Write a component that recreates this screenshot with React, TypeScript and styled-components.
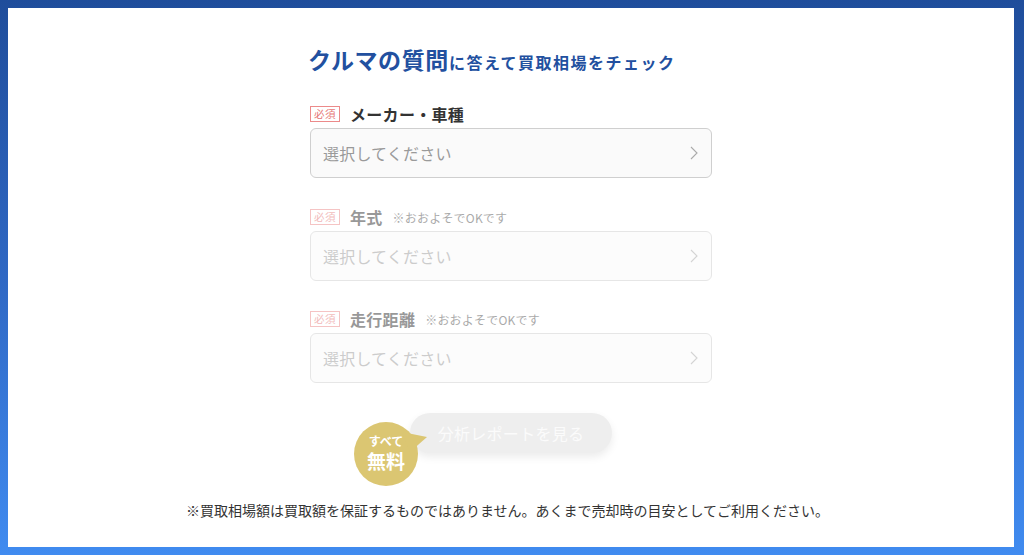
import React from "react";
import styled, { createGlobalStyle } from "styled-components";

const Global = createGlobalStyle`
  html, body { margin: 0; padding: 0; }
  body {
    font-family: "Noto Sans CJK JP", "Noto Sans", sans-serif;
    width: 1024px;
    height: 555px;
    overflow: hidden;
  }
`;

const Frame = styled.div`
  box-sizing: border-box;
  width: 1024px;
  height: 555px;
  padding: 8px 10px 8px 8px;
  background: linear-gradient(180deg, #1f4d9b 0%, #2f68c4 50%, #408bf0 100%);
`;

const Card = styled.main`
  box-sizing: border-box;
  height: 100%;
  background: #fff;
  display: flex;
  flex-direction: column;
  align-items: center;
  padding-top: 35px;
`;

const Form = styled.div`
  width: 402px;
  display: flex;
  flex-direction: column;
`;

const Title = styled.h1`
  margin: 0;
  height: 32px;
  line-height: 32px;
  color: #22509f;
  font-weight: 700;
  font-size: 16px;
  letter-spacing: 1.5px;
  white-space: nowrap;
  margin-left: -2px;
`;

const TitleBig = styled.span`
  font-size: 23px;
  letter-spacing: 0.6px;
`;

const Field = styled.div<{ $disabled?: boolean; $gap?: number }>`
  display: flex;
  flex-direction: column;
  margin-top: ${(p) => p.$gap ?? 27}px;
  opacity: ${(p) => (p.$disabled ? 0.5 : 1)};
`;

const LabelRow = styled.div`
  height: 22px;
  display: flex;
  align-items: center;
  gap: 10px;
  margin-bottom: 3px;
`;

const Required = styled.span`
  box-sizing: border-box;
  width: 30px;
  height: 16px;
  border: 1px solid #ec8a8a;
  color: #e67878;
  font-size: 10.5px;
  line-height: 14px;
  text-align: center;
  letter-spacing: 0.5px;
`;

const Label = styled.span`
  font-size: 16px;
  font-weight: 700;
  color: #333;
  letter-spacing: 0.3px;
`;

const Note = styled.span`
  font-size: 12px;
  color: #555;
  letter-spacing: 0.2px;
`;

const SelectBox = styled.div`
  box-sizing: border-box;
  height: 50px;
  border: 1px solid #cfcfcf;
  border-radius: 6px;
  background: #fafafa;
  display: flex;
  align-items: center;
  justify-content: space-between;
  padding: 0 12px;
`;

const Placeholder = styled.span`
  font-size: 16px;
  color: #9a9a9a;
  letter-spacing: 0.2px;
`;

const ButtonArea = styled.div`
  position: relative;
  margin-top: 30px;
`;

const ReportButton = styled.button`
  width: 202px;
  height: 40px;
  border: none;
  border-radius: 20px;
  background: #eeeeee;
  color: #fbfbfb;
  font-family: "Noto Sans CJK JP", sans-serif;
  font-size: 16px;
  letter-spacing: 0.3px;
  box-shadow: 0 4px 8px rgba(0, 0, 0, 0.08);
  padding: 0;
  cursor: default;
`;

const FreeBadge = styled.div`
  position: absolute;
  left: -56px;
  top: 9px;
  width: 64px;
  height: 64px;
  border-radius: 50%;
  background: #dbc672;
  color: #fff;
  display: flex;
  flex-direction: column;
  align-items: center;
  justify-content: center;
  padding-bottom: 3px;
  box-sizing: border-box;
  font-weight: 700;
  &::after {
    content: "";
    position: absolute;
    left: 48px;
    top: 6px;
    width: 26px;
    height: 24px;
    background: #dbc672;
    clip-path: polygon(0 4px, 25px 9px, 8px 24px);
  }
`;

const BadgeSmall = styled.span`
  font-size: 12px;
  line-height: 12px;
  letter-spacing: 0;
`;

const BadgeLarge = styled.span`
  font-size: 19px;
  line-height: 20px;
  margin-top: 4px;
`;

const Disclaimer = styled.p`
  margin: 47px 0 0;
  font-size: 14px;
  line-height: 20px;
  color: #333;
  margin-left: -7px;
`;

function Chevron() {
  return (
    <svg width="10" height="16" viewBox="0 0 10 16" aria-hidden>
      <path d="M2 2 L8 8 L2 14" fill="none" stroke="#aaa" strokeWidth="1.1" />
    </svg>
  );
}

type FieldProps = { label: string; note?: string; disabled?: boolean; gap?: number };

function SelectField({ label, note, disabled, gap }: FieldProps) {
  return (
    <Field $disabled={disabled} $gap={gap}>
      <LabelRow>
        <Required>必須</Required>
        <Label>{label}</Label>
        {note && <Note>{note}</Note>}
      </LabelRow>
      <SelectBox>
        <Placeholder>選択してください</Placeholder>
        <Chevron />
      </SelectBox>
    </Field>
  );
}

export default function App() {
  return (
    <>
      <Global />
      <Frame>
        <Card>
          <Form>
            <Title>
              <TitleBig>クルマの質問</TitleBig>に答えて買取相場をチェック
            </Title>
            <SelectField label="メーカー・車種" gap={28} />
            <SelectField label="年式" note="※おおよそでOKです" disabled gap={28} />
            <SelectField label="走行距離" note="※おおよそでOKです" disabled gap={27} />
          </Form>
          <ButtonArea>
            <ReportButton>分析レポートを見る</ReportButton>
            <FreeBadge>
              <BadgeSmall>すべて</BadgeSmall>
              <BadgeLarge>無料</BadgeLarge>
            </FreeBadge>
          </ButtonArea>
          <Disclaimer>
            ※買取相場額は買取額を保証するものではありません。あくまで売却時の目安としてご利用ください。
          </Disclaimer>
        </Card>
      </Frame>
    </>
  );
}
